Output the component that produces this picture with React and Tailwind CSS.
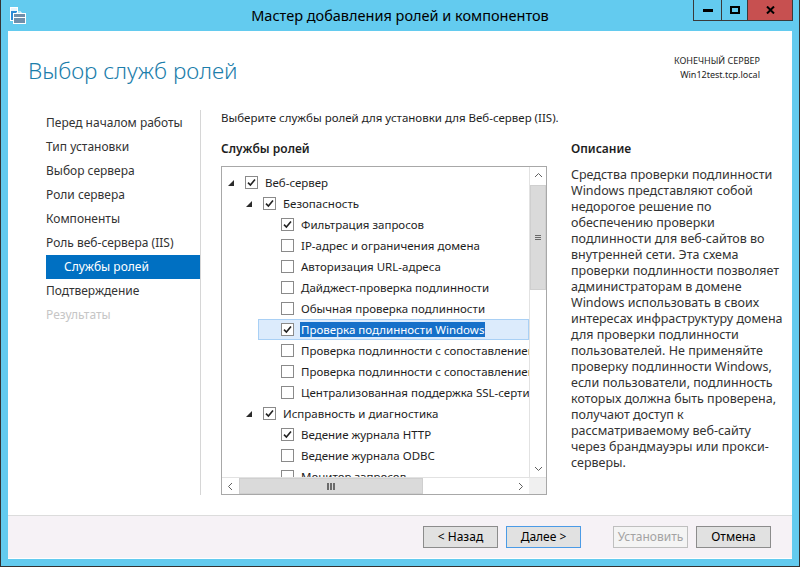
import React from 'react';

const rows = [
  { level: 0, expand: true, checked: true, text: 'Веб-сервер' },
  { level: 1, expand: true, checked: true, text: 'Безопасность' },
  { level: 2, checked: true, text: 'Фильтрация запросов' },
  { level: 2, text: 'IP-адрес и ограничения домена' },
  { level: 2, text: 'Авторизация URL-адреса' },
  { level: 2, text: 'Дайджест-проверка подлинности' },
  { level: 2, text: 'Обычная проверка подлинности' },
  { level: 2, checked: true, selected: true, text: 'Проверка подлинности Windows' },
  { level: 2, text: 'Проверка подлинности с сопоставлением сертификата клиента' },
  { level: 2, text: 'Проверка подлинности с сопоставлением сертификата клиента IIS' },
  { level: 2, text: 'Централизованная поддержка SSL-сертификатов' },
  { level: 1, expand: true, checked: true, text: 'Исправность и диагностика' },
  { level: 2, checked: true, text: 'Ведение журнала HTTP' },
  { level: 2, text: 'Ведение журнала ODBC' },
  { level: 2, text: 'Монитор запросов' },
];

const indent = ['ml-0', 'ml-[18px]', 'ml-[36px]'];

const navItems = [
  'Перед началом работы',
  'Тип установки',
  'Выбор сервера',
  'Роли сервера',
  'Компоненты',
  'Роль веб-сервера (IIS)',
];

const description = [
  'Средства проверки подлинности',
  'Windows представляют собой',
  'недорогое решение по',
  'обеспечению проверки',
  'подлинности для веб-сайтов во',
  'внутренней сети. Эта схема',
  'проверки подлинности позволяет',
  'администраторам в домене',
  'Windows использовать в своих',
  'интересах инфраструктуру домена',
  'для проверки подлинности',
  'пользователей. Не применяйте',
  'проверку подлинности Windows,',
  'если пользователи, подлинность',
  'которых должна быть проверена,',
  'получают доступ к',
  'рассматриваемому веб-сайту',
  'через брандмауэры или прокси-',
  'серверы.',
];

function Checkbox({ checked }) {
  return (
    <svg width="13" height="13" viewBox="0 0 13 13" className="shrink-0">
      <rect x="0.5" y="0.5" width="12" height="12" fill="#fff" stroke="#8a8a8a" />
      {checked && <path d="M3 6.6 L5.4 9 L10 3.6" fill="none" stroke="#222" strokeWidth="1.6" />}
    </svg>
  );
}

function TreeRow({ level, expand, checked, selected, text }) {
  return (
    <div
      className={`flex h-[21px] items-center whitespace-nowrap border pl-[5px] ${indent[level]} ${
        selected ? 'border-[#a9d0f5] bg-[#dcebfc]' : 'border-transparent'
      }`}
    >
      <div className="flex w-[17px] shrink-0 items-center">
        {expand && (
          <svg width="6" height="6" viewBox="0 0 6 6">
            <path d="M6 0 L6 6 L0 6 Z" fill="#2b2b2b" />
          </svg>
        )}
      </div>
      <Checkbox checked={checked} />
      <span
        className={`ml-[6px] shrink-0 px-[1px] leading-[15px] ${
          selected ? 'bg-[#1670c9] text-white' : 'text-[#1e1e1e]'
        }`}
      >
        {text}
      </span>
    </div>
  );
}

function Chevron({ d }) {
  return (
    <svg width="17" height="17" viewBox="0 0 17 17">
      <path d={d} fill="none" stroke="#606060" strokeWidth="1" />
    </svg>
  );
}

function WinButton({ children, variant }) {
  const styles = {
    normal: 'border-[#8c8c8c] bg-[#e1e1e1] text-black',
    focus: 'border-[#4b9be6] bg-[#e1e1e1] text-black',
    disabled: 'border-[#bfbfbf] bg-[#f4f4f4] text-[#a3a3a3]',
  };
  return (
    <button className={`flex h-[22px] w-[75px] items-center justify-center border text-[12px] ${styles[variant]}`}>
      {children}
    </button>
  );
}

export default function App() {
  return (
    <div className="flex h-[567px] w-[800px] flex-col border-x border-b border-[#333] bg-[#63cbef] font-['Segoe_UI','Noto_Sans',sans-serif]">
      {/* title bar */}
      <div className="grid h-[31px] grid-cols-[1fr_auto_1fr]">
        <div className="pl-[9px] pt-[7px]">
          <svg width="18" height="18" viewBox="0 0 18 18">
            <rect x="0.5" y="0.5" width="7" height="13" fill="#2a8ad6" stroke="#fff" />
            <rect x="1" y="1" width="6" height="3" fill="#e8f4fb" />
            <path d="M7 6.5 V5 H11 V6.5" fill="none" stroke="#fff" strokeWidth="1" />
            <rect x="3.5" y="6.5" width="12" height="10" fill="#6f8fab" stroke="#fff" />
            <line x1="4" y1="10.5" x2="15" y2="10.5" stroke="#fff" strokeWidth="1" />
          </svg>
        </div>
        <div className="flex items-center text-[14.5px] text-black">Мастер добавления ролей и компонентов</div>
        <div className="flex justify-end pr-[6px]">
          <div className="flex h-[21px] border border-t-0 border-[#3a3a3a]">
            <div className="flex w-[28px] items-center justify-center border-r border-[#3a3a3a]">
              <div className="h-[3px] w-[10px] bg-black" />
            </div>
            <div className="flex w-[26px] items-center justify-center border-r border-[#3a3a3a]">
              <div className="h-[8px] w-[10px] border-2 border-black" />
            </div>
            <div className="flex w-[44px] items-center justify-center bg-[#c75050]">
              <svg width="9" height="8" viewBox="0 0 9 8">
                <path d="M1 0.5 L8 7.5 M8 0.5 L1 7.5" stroke="#000" strokeWidth="2" />
              </svg>
            </div>
          </div>
        </div>
      </div>

      {/* client */}
      <div className="mx-[7px] flex h-[528px] flex-col bg-white">
        <div className="h-[485px] border-b border-[#dcdcdc]">
          {/* header */}
          <div className="flex h-[79px] justify-between">
            <div className="pl-[20px] pt-[24px] text-[22.5px] font-light leading-[32px] text-[#1c7eab]">
              Выбор служб ролей
            </div>
            <div className="pr-[32px] pt-[23px] text-right text-[9px] leading-[14px] text-[#1e1e1e]">
              <div>КОНЕЧНЫЙ СЕРВЕР</div>
              <div>Win12test.tcp.local</div>
            </div>
          </div>

          {/* body */}
          <div className="flex h-[385px]">
            <div className="w-[193px] border-r border-[#d6d6d6] pl-[38px] pt-[1px] text-[12px] text-[#333]">
              {navItems.map((t) => (
                <div key={t} className="flex h-[24px] items-center">{t}</div>
              ))}
              <div className="flex h-[24px] items-center bg-[#0070c2] pl-[18px] text-white">Службы ролей</div>
              <div className="flex h-[24px] items-center">Подтверждение</div>
              <div className="flex h-[24px] items-center text-[#c6c6c6]">Результаты</div>
            </div>

            <div className="flex flex-1 flex-col pl-[20px] text-[11.5px]">
              <div className="h-[16px] leading-[16px] text-[#1e1e1e]">
                Выберите службы ролей для установки для Веб-сервер (IIS).
              </div>
              <div className="mt-[15px] flex">
                <div className="w-[326px]">
                  <div className="h-[16px] text-[12px] font-semibold leading-[16px] text-[#1e1e1e]">Службы ролей</div>
                  <div className="mt-[9px] flex h-[329px] flex-col border border-[#a8a8a8]">
                    <div className="flex min-h-0 flex-1">
                      <div className="min-w-0 flex-1 overflow-hidden pt-[5px]">
                        {rows.map((r) => (
                          <TreeRow key={r.text} {...r} />
                        ))}
                      </div>
                      <div className="flex w-[17px] flex-col border-l border-[#e2e2e2]">
                        <Chevron d="M5 10 L8.5 6.5 L12 10" />
                        <div className="flex-1">
                          <div className="mt-[1px] flex h-[105px] items-center justify-center border border-[#cfcfcf] bg-[#dadada]">
                            <div className="flex flex-col gap-[1px]">
                              <div className="h-[1px] w-[6px] bg-[#6a6a6a]" />
                              <div className="h-[1px] w-[6px] bg-[#6a6a6a]" />
                              <div className="h-[1px] w-[6px] bg-[#6a6a6a]" />
                            </div>
                          </div>
                        </div>
                        <Chevron d="M5 7 L8.5 10.5 L12 7" />
                      </div>
                    </div>
                    <div className="flex h-[17px] border-t border-[#e2e2e2]">
                      <Chevron d="M10 5 L6.5 8.5 L10 12" />
                      <div className="flex-1">
                        <div className="flex h-full w-[184px] items-center justify-center border border-[#cfcfcf] bg-[#dadada]">
                          <div className="flex gap-[1px]">
                            <div className="h-[7px] w-[2px] bg-[#6a6a6a]" />
                            <div className="h-[7px] w-[2px] bg-[#6a6a6a]" />
                            <div className="h-[7px] w-[2px] bg-[#6a6a6a]" />
                          </div>
                        </div>
                      </div>
                      <Chevron d="M7 5 L10.5 8.5 L7 12" />
                      <div className="w-[17px] bg-[#f0f0f0]" />
                    </div>
                  </div>
                </div>

                <div className="ml-[24px]">
                  <div className="h-[16px] text-[12px] font-semibold leading-[16px] text-[#1e1e1e]">Описание</div>
                  <div className="mt-[10px] whitespace-nowrap text-[12.5px] leading-[16px] text-[#333]">
                    {description.map((l) => (
                      <div key={l}>{l}</div>
                    ))}
                  </div>
                </div>
              </div>
            </div>
          </div>
        </div>

        {/* footer */}
        <div className="flex h-[42px] items-center justify-end bg-[#f6f2f6] pr-[21px]">
          <WinButton variant="normal">&lt; Назад</WinButton>
          <div className="ml-[8px]">
            <WinButton variant="focus">Далее &gt;</WinButton>
          </div>
          <div className="ml-[32px]">
            <WinButton variant="disabled">Установить</WinButton>
          </div>
          <div className="ml-[8px]">
            <WinButton variant="normal">Отмена</WinButton>
          </div>
        </div>
      </div>
    </div>
  );
}
